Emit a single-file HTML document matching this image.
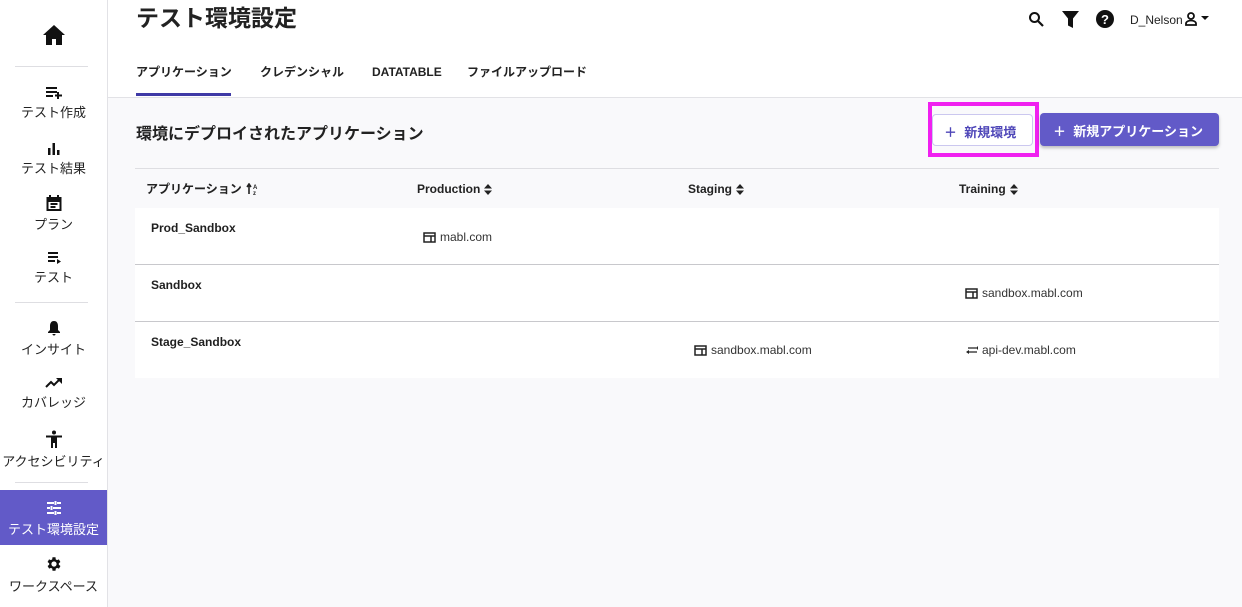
<!DOCTYPE html>
<html><head><meta charset="utf-8"><style>
*{box-sizing:border-box;margin:0;padding:0}
body{width:1242px;height:607px;overflow:hidden;font-family:"Liberation Sans","Noto Sans CJK JP",sans-serif;color:#1f1f1f;background:#f9f9fb;position:relative}
.side{position:absolute;left:0;top:0;width:108px;height:607px;background:#fff;border-right:1px solid #e2e2e6}
.it{position:absolute;left:0;width:107px;text-align:center;font-size:13px;color:#222;line-height:16px}
.it svg{display:block;margin:0 auto 6px}
.div{position:absolute;left:15px;width:73px;height:1px;background:#dedee2}
.top{position:absolute;left:108px;top:0;right:0;height:98px;background:#fff;border-bottom:1px solid #e2e2e6}
.abs{position:absolute}
.tab{position:absolute;top:64px;font-size:12px;font-weight:bold;color:#222;line-height:16px}
.hdr{position:absolute;top:181px;font-size:12px;font-weight:bold;color:#222;line-height:16px;display:flex;align-items:center;gap:4px}
.row{position:absolute;left:135px;width:1084px;background:#fff;border-bottom:1px solid #c8c8cc}
.nm{position:absolute;left:16px;top:13px;font-size:12px;font-weight:bold}
.url{position:absolute;font-size:12px;color:#333;display:flex;align-items:center;gap:4px}
</style></head><body>
<div class="side">
 <div class="it" style="top:24px"><svg width="24" height="22" viewBox="0 0 24 22"><path d="M12 1 1 11h3v10h6v-6h4v6h6V11h3z" fill="#111"/></svg></div>
 <div class="div" style="top:66px"></div>
 <div class="it" style="top:87px"><svg width="18" height="12" viewBox="0 0 18 12"><path d="M1 1h11M1 5h11M1 9h7M13 5v7M10 8.5h7" stroke="#111" stroke-width="2"/></svg>テスト作成</div>
 <div class="it" style="top:142px"><svg width="14" height="13" viewBox="0 0 14 13"><path d="M1 6h2.5v7H1zM5.5 1h2.5v12H5.5zM10 8h2.5v5H10z" fill="#111"/></svg>テスト結果</div>
 <div class="it" style="top:195px"><svg width="16" height="16" viewBox="0 0 16 16"><rect x="1.5" y="3" width="13" height="12" fill="none" stroke="#111" stroke-width="2"/><path d="M1.5 3h13v3h-13zM4 0v4M12 0v4M4.5 9h7M4.5 12h5" stroke="#111" stroke-width="2" fill="#111"/></svg>プラン</div>
 <div class="it" style="top:252px"><svg width="14" height="12" viewBox="0 0 14 12"><path d="M1 1h10M1 5h10M1 9h7" stroke="#111" stroke-width="2"/><path d="M10 7l4 2.5-4 2.5z" fill="#111"/></svg>テスト</div>
 <div class="div" style="top:302px"></div>
 <div class="it" style="top:320px"><svg width="14" height="16" viewBox="0 0 14 16"><path d="M7 1C4 1 3 3.5 3 6v4L1 12v1h12v-1l-2-2V6c0-2.5-1-5-4-5zM5.5 14h3a1.5 1.5 0 01-3 0z" fill="#111"/></svg>インサイト</div>
 <div class="it" style="top:377px"><svg width="18" height="12" viewBox="0 0 18 12"><path d="M1 10l5-5 3 3 6-6" stroke="#111" stroke-width="2" fill="none"/><path d="M11 1h6v6z" fill="#111"/></svg>カバレッジ</div>
 <div class="it" style="top:430px"><svg width="18" height="18" viewBox="0 0 18 18"><circle cx="9" cy="2.5" r="2" fill="#111"/><path d="M1 5.5h16v2h-5V18h-2v-5H8v5H6V7.5H1z" fill="#111"/></svg>アクセシビリティ</div>
 <div class="div" style="top:482px"></div>
 <div class="abs" style="left:0;top:490px;width:107px;height:55px;background:#625ac8"></div>
 <div class="it" style="top:500px;color:#fff"><svg width="16" height="16" viewBox="0 0 16 16"><path d="M1 3h7M11 3h4M1 8h3M7 8h8M1 13h7M11 13h4M9.5 1v4M5.5 6v4M9.5 11v4" stroke="#fff" stroke-width="2"/></svg>テスト環境設定</div>
 <div class="it" style="top:555px"><svg width="18" height="18" viewBox="0 0 24 24"><path fill="#111" d="M19.4 13a7.5 7.5 0 000-2l2.1-1.6-2-3.5-2.5 1a7 7 0 00-1.7-1L15 3h-4l-.4 2.9a7 7 0 00-1.7 1l-2.5-1-2 3.5L6.6 11a7.5 7.5 0 000 2l-2.1 1.6 2 3.5 2.5-1a7 7 0 001.7 1L11 21h4l.4-2.9a7 7 0 001.7-1l2.5 1 2-3.5zM13 15.5a3.5 3.5 0 110-7 3.5 3.5 0 010 7z" transform="translate(-1 0)"/></svg>ワークスペース</div>
</div>
<div class="top">
 <div class="abs" style="left:28px;top:3px;font-size:23px;font-weight:bold;color:#222;line-height:30px">テスト環境設定</div>
 <div class="tab" style="left:28px">アプリケーション</div>
 <div class="abs" style="left:28px;top:93px;width:95px;height:3px;background:#3f3aa6"></div>
 <div class="tab" style="left:152px">クレデンシャル</div>
 <div class="tab" style="left:264px">DATATABLE</div>
 <div class="tab" style="left:359px">ファイルアップロード</div>
 <svg class="abs" style="left:920px;top:11px" width="16" height="16" viewBox="0 0 16 16"><circle cx="6.5" cy="6.5" r="4.5" stroke="#111" stroke-width="2" fill="none"/><path d="M10 10l5 5" stroke="#111" stroke-width="2.2"/></svg>
 <svg class="abs" style="left:954px;top:11px" width="17" height="17" viewBox="0 0 17 17"><path d="M0 0h17l-6 7.5V17l-5-2.5v-7z" fill="#111"/></svg>
 <svg class="abs" style="left:988px;top:10px" width="18" height="18" viewBox="0 0 18 18"><circle cx="9" cy="9" r="9" fill="#111"/><text x="9" y="14" text-anchor="middle" font-size="13" font-weight="bold" fill="#fff" font-family="Liberation Sans">?</text></svg>
 <div class="abs" style="left:1022px;top:13px;font-size:12px;color:#222">D_Nelson</div>
 <svg class="abs" style="left:1077px;top:12px" width="28" height="14" viewBox="0 0 28 14"><circle cx="6" cy="4" r="3" stroke="#111" stroke-width="1.8" fill="none"/><path d="M1 13v-1.5c0-2 3-3 5-3s5 1 5 3V13z" stroke="#111" stroke-width="1.8" fill="none"/><path d="M16 4h8l-4 4z" fill="#111"/></svg>
</div>
<div class="abs" style="left:136px;top:125px;font-size:16px;font-weight:bold;color:#222;line-height:20px">環境にデプロイされたアプリケーション</div>
<div class="abs" style="left:928px;top:102px;width:111px;height:55px;border:4px solid #f020f0"></div>
<div class="abs" style="left:932px;top:114px;width:101px;height:32px;border:1px solid #cbc7ef;border-radius:4px;background:#fff;color:#4e46b8;font-size:13px;font-weight:bold;padding:7px 0 0 11px">＋&nbsp;&nbsp;新規環境</div>
<div class="abs" style="left:1040px;top:113px;width:179px;height:33px;border-radius:4px;background:#625ac8;color:#fff;font-size:13px;font-weight:bold;padding:8px 0 0 13px;box-shadow:0 2px 3px rgba(0,0,0,.25)">＋&nbsp;&nbsp;新規アプリケーション</div>
<div class="abs" style="left:135px;top:168px;width:1084px;height:1px;background:#dedee2"></div>
<div class="hdr" style="left:146px">アプリケーション <svg width="14" height="12" viewBox="0 0 14 12"><path d="M3 11V2M1 4l2-3 2 3" stroke="#222" stroke-width="1.6" fill="none"/><text x="7" y="6" font-size="6" font-weight="bold" font-family="Liberation Sans" fill="#222">A</text><text x="7" y="12" font-size="6" font-weight="bold" font-family="Liberation Sans" fill="#222">z</text></svg></div>
<div class="hdr" style="left:417px">Production <svg width="8" height="11" viewBox="0 0 8 11"><path d="M0 4.5L4 0l4 4.5zM0 6.5h8L4 11z" fill="#222"/></svg></div>
<div class="hdr" style="left:688px">Staging <svg width="8" height="11" viewBox="0 0 8 11"><path d="M0 4.5L4 0l4 4.5zM0 6.5h8L4 11z" fill="#222"/></svg></div>
<div class="hdr" style="left:959px">Training <svg width="8" height="11" viewBox="0 0 8 11"><path d="M0 4.5L4 0l4 4.5zM0 6.5h8L4 11z" fill="#222"/></svg></div>
<div class="row" style="top:208px;height:57px"><div class="nm">Prod_Sandbox</div><div class="url" style="left:288px;top:22px"><svg width="13" height="11" viewBox="0 0 13 11"><rect x="1" y="1" width="11" height="9" fill="none" stroke="#222" stroke-width="1.5"/><path d="M1 4h11M8 4v6" stroke="#222" stroke-width="1.5"/></svg>mabl.com</div></div>
<div class="row" style="top:265px;height:57px"><div class="nm">Sandbox</div><div class="url" style="left:830px;top:21px"><svg width="13" height="11" viewBox="0 0 13 11"><rect x="1" y="1" width="11" height="9" fill="none" stroke="#222" stroke-width="1.5"/><path d="M1 4h11M8 4v6" stroke="#222" stroke-width="1.5"/></svg>sandbox.mabl.com</div></div>
<div class="row" style="top:322px;height:56px;border-bottom:none"><div class="nm">Stage_Sandbox</div><div class="url" style="left:559px;top:21px"><svg width="13" height="11" viewBox="0 0 13 11"><rect x="1" y="1" width="11" height="9" fill="none" stroke="#222" stroke-width="1.5"/><path d="M1 4h11M8 4v6" stroke="#222" stroke-width="1.5"/></svg>sandbox.mabl.com</div><div class="url" style="left:830px;top:21px"><svg width="13" height="11" viewBox="0 0 13 11"><path d="M3 7h9M12 3H3" stroke="#222" stroke-width="1.3"/><path d="M1 7l3-2v4zM12 1v4l2-2z" fill="#222"/></svg>api-dev.mabl.com</div></div>
</body></html>
